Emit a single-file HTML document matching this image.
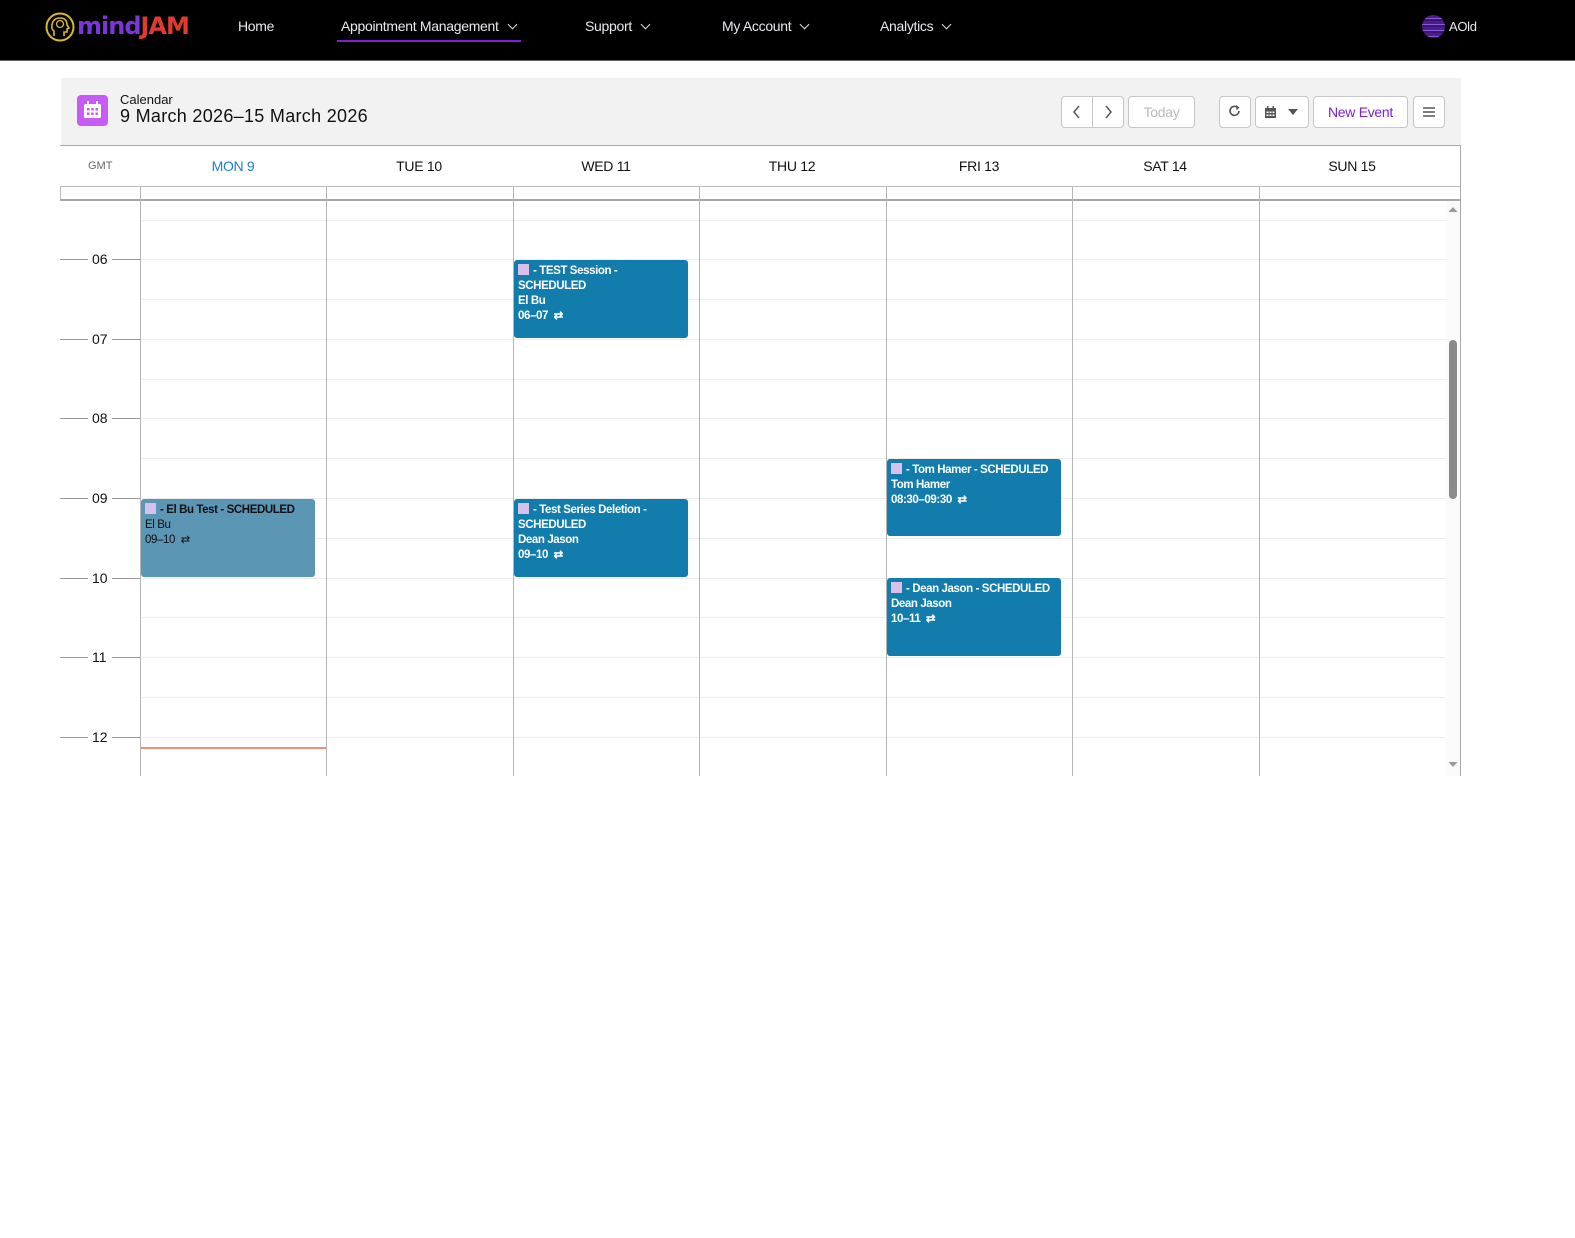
<!DOCTYPE html>
<html><head><meta charset="utf-8"><style>
*{box-sizing:border-box;margin:0;padding:0}
body{width:1575px;height:1238px;background:#fff;font-family:"Liberation Sans",sans-serif;position:relative;overflow:hidden;color:#111}
.a{position:absolute}
.nav{left:0;top:0;width:1575px;height:61px;background:#000;border-bottom:1px solid #666}
.nav .it{color:#e8e8f0;font-size:14px;top:18px;letter-spacing:-0.3px}
.chev{display:inline-block;width:7px;height:7px;border-right:1.5px solid #ddd;border-bottom:1.5px solid #ddd;transform:rotate(45deg);margin-left:10px;position:relative;top:-3px}
.hdr{left:61px;top:78px;width:1400px;height:68px;background:#f2f2f2}
.btn{background:#fff;border:1px solid #c6c6c6;border-radius:4px;height:32px;top:96px}
.hl{height:1px;background:#ececec;left:140px;width:1306px}
.vl{width:1px;background:#b5b5b5;top:187px;height:589px}
.hr{font-size:14px;color:#111}
.tk{height:1px;background:#999}
.ev{border-radius:3px;color:#fff;font-size:11.5px;font-weight:bold;line-height:15px;padding:4px 4px;letter-spacing:-0.4px;overflow:hidden}
.ev .t{white-space:nowrap}
.ev .n{font-weight:normal}
.sq{display:inline-block;width:11px;height:11px;background:#d8c0ea;vertical-align:-1px;margin-right:4px}
.day{top:158px;font-size:14px;width:186px;text-align:center;letter-spacing:-0.3px}
</style></head><body>
<div class="a nav">
  <svg class="a" style="left:45px;top:12px" width="30" height="30" viewBox="0 0 30 30"><circle cx="15" cy="15" r="13.5" fill="none" stroke="#d9b92a" stroke-width="2"/><path d="M9 24 V19 Q6 17 7 13 Q8 6 15 6 Q22 6 22 13 L24 16 L22 17 V20 H19 V24" fill="none" stroke="#d9b92a" stroke-width="1.6"/><circle cx="15" cy="12" r="3.5" fill="none" stroke="#d9b92a" stroke-width="1.3"/></svg>
  <div class="a" style="left:77px;top:10px;font-family:'DejaVu Sans',sans-serif;font-size:24px;font-weight:bold;letter-spacing:-1px;line-height:32px"><span style="color:#7b35d8">mind</span><span style="color:#e23a2e">JAM</span></div>
  <div class="a it" style="left:238px">Home</div>
  <div class="a it" style="left:341px">Appointment Management<span class="chev"></span></div>
  <div class="a" style="left:337px;top:40px;width:184px;height:2px;background:#7a22d0"></div>
  <div class="a it" style="left:585px">Support<span class="chev"></span></div>
  <div class="a it" style="left:722px">My Account<span class="chev"></span></div>
  <div class="a it" style="left:880px">Analytics<span class="chev"></span></div>
  <div class="a" style="left:1422px;top:15px;width:23px;height:23px;border-radius:50%;background:repeating-linear-gradient(180deg,#4a1f8a 0 3px,#8a5ad8 3px 4px,#3a1670 4px 6px)"></div>
  <div class="a it" style="left:1449px;top:19px;font-size:13px">AOld</div>
</div>

<div class="a hdr"></div>
<div class="a" style="left:77px;top:95px;width:31px;height:31px;border-radius:4px;background:#c65cf5"></div>
<svg class="a" style="left:83px;top:100px" width="19" height="20" viewBox="0 0 19 20"><rect x="1" y="4" width="17" height="14" rx="1.5" fill="#fff"/><rect x="4" y="1" width="2" height="5" fill="#fff"/><rect x="13" y="1" width="2" height="5" fill="#fff"/><g fill="#c65cf5"><rect x="4" y="8" width="2.5" height="2.5"/><rect x="8.2" y="8" width="2.5" height="2.5"/><rect x="12.5" y="8" width="2.5" height="2.5"/><rect x="4" y="12.5" width="2.5" height="2.5"/><rect x="8.2" y="12.5" width="2.5" height="2.5"/><rect x="12.5" y="12.5" width="2.5" height="2.5"/></g></svg>
<div class="a" style="left:120px;top:92px;font-size:13px">Calendar</div>
<div class="a" style="left:120px;top:106px;font-size:18px;letter-spacing:0.3px">9 March 2026–15 March 2026</div>

<div class="a btn" style="left:1061px;width:63px"></div>
<div class="a" style="left:1092px;top:97px;width:1px;height:30px;background:#c6c6c6"></div>
<svg class="a" style="left:1071px;top:104px" width="12" height="16"><path d="M8 2 L3 8 L8 14" fill="none" stroke="#555" stroke-width="1.5"/></svg>
<svg class="a" style="left:1102px;top:104px" width="12" height="16"><path d="M4 2 L9 8 L4 14" fill="none" stroke="#555" stroke-width="1.5"/></svg>
<div class="a btn" style="left:1128px;width:67px;color:#b9b9b9;font-size:14px;text-align:center;line-height:30px;letter-spacing:-0.3px">Today</div>
<div class="a btn" style="left:1219px;width:32px"></div>
<svg class="a" style="left:1227px;top:103px" width="16" height="16"><path d="M12 8 A4.5 4.5 0 1 1 10.5 4.5" fill="none" stroke="#555" stroke-width="1.6"/><path d="M9 2 L12.5 4.5 L9.5 7.5Z" fill="#555"/></svg>
<div class="a btn" style="left:1255px;width:54px"></div>
<svg class="a" style="left:1264px;top:104px" width="36" height="16"><rect x="1" y="4" width="11" height="10" fill="#555"/><rect x="3" y="2" width="1.5" height="3" fill="#555"/><rect x="8.5" y="2" width="1.5" height="3" fill="#555"/><g fill="#fff"><rect x="2.5" y="7.5" width="2" height="1.5"/><rect x="5.5" y="7.5" width="2" height="1.5"/><rect x="8.5" y="7.5" width="2" height="1.5"/><rect x="2.5" y="10.5" width="2" height="1.5"/><rect x="5.5" y="10.5" width="2" height="1.5"/><rect x="8.5" y="10.5" width="2" height="1.5"/></g><path d="M24 5 L34 5 L29 11Z" fill="#555"/></svg>
<div class="a btn" style="left:1313px;width:95px;color:#7a22d0;font-size:14px;text-align:center;line-height:30px;letter-spacing:-0.3px">New Event</div>
<div class="a btn" style="left:1413px;width:32px"></div>
<svg class="a" style="left:1421px;top:105px" width="16" height="14"><path d="M2 3H14M2 7H14M2 11H14" stroke="#555" stroke-width="1.5"/></svg>

<div class="a" style="left:60px;top:145px;width:1401px;height:1px;background:#aaa"></div>
<div class="a" style="left:1460px;top:145px;width:1px;height:631px;background:#aaa"></div>
<div class="a" style="left:88px;top:160px;font-size:11px;color:#666">GMT</div>
<div class="a day" style="left:140px;color:#1a7fd0">MON 9</div>
<div class="a day" style="left:326px">TUE 10</div>
<div class="a day" style="left:513px">WED 11</div>
<div class="a day" style="left:699px">THU 12</div>
<div class="a day" style="left:886px">FRI 13</div>
<div class="a day" style="left:1072px">SAT 14</div>
<div class="a day" style="left:1259px">SUN 15</div>
<div class="a" style="left:60px;top:186px;width:1400px;height:1px;background:#bbb"></div>
<div class="a" style="left:60px;top:186px;width:1px;height:14px;background:#bbb"></div>
<div class="a" style="left:60px;top:199px;width:1400px;height:2px;background:#a8a8a8"></div>
<div class="a" style="left:1446px;top:201px;width:14px;height:575px;background:#fafafa"></div>
<svg class="a" style="left:1447px;top:205px" width="12" height="8"><path d="M1.5 7 L6 2 L10.5 7Z" fill="#999"/></svg>
<svg class="a" style="left:1447px;top:761px" width="12" height="8"><path d="M1.5 1 L6 6 L10.5 1Z" fill="#999"/></svg>
<div class="a" style="left:1449px;top:340px;width:8px;height:159px;border-radius:4px;background:#8a8a8a"></div>

<div class="a hl" style="top:220px"></div>
<div class="a hl" style="top:259px"></div>
<div class="a hl" style="top:299px"></div>
<div class="a hl" style="top:339px"></div>
<div class="a hl" style="top:379px"></div>
<div class="a hl" style="top:418px"></div>
<div class="a hl" style="top:458px"></div>
<div class="a hl" style="top:498px"></div>
<div class="a hl" style="top:538px"></div>
<div class="a hl" style="top:578px"></div>
<div class="a hl" style="top:617px"></div>
<div class="a hl" style="top:657px"></div>
<div class="a hl" style="top:697px"></div>
<div class="a hl" style="top:737px"></div>

<div class="a vl" style="left:140px"></div>
<div class="a vl" style="left:326px"></div>
<div class="a vl" style="left:513px"></div>
<div class="a vl" style="left:699px"></div>
<div class="a vl" style="left:886px"></div>
<div class="a vl" style="left:1072px"></div>
<div class="a vl" style="left:1259px"></div>

<div class="a tk" style="left:60px;top:259px;width:28px"></div><div class="a tk" style="left:112px;top:259px;width:28px"></div><div class="a hr" style="left:92px;top:251px">06</div>
<div class="a tk" style="left:60px;top:339px;width:28px"></div><div class="a tk" style="left:112px;top:339px;width:28px"></div><div class="a hr" style="left:92px;top:331px">07</div>
<div class="a tk" style="left:60px;top:418px;width:28px"></div><div class="a tk" style="left:112px;top:418px;width:28px"></div><div class="a hr" style="left:92px;top:410px">08</div>
<div class="a tk" style="left:60px;top:498px;width:28px"></div><div class="a tk" style="left:112px;top:498px;width:28px"></div><div class="a hr" style="left:92px;top:490px">09</div>
<div class="a tk" style="left:60px;top:578px;width:28px"></div><div class="a tk" style="left:112px;top:578px;width:28px"></div><div class="a hr" style="left:92px;top:570px">10</div>
<div class="a tk" style="left:60px;top:657px;width:28px"></div><div class="a tk" style="left:112px;top:657px;width:28px"></div><div class="a hr" style="left:92px;top:649px">11</div>
<div class="a tk" style="left:60px;top:737px;width:28px"></div><div class="a tk" style="left:112px;top:737px;width:28px"></div><div class="a hr" style="left:92px;top:729px">12</div>

<div class="a" style="left:141px;top:747px;width:185px;height:2px;background:#fa8a78"></div>

<div class="a ev" style="left:514px;top:260px;width:174px;height:78px;background:#127dad"><span class="sq"></span>- TEST Session - SCHEDULED<br><span>El Bu</span><br><span>06–07 &nbsp;⇄</span></div>
<div class="a ev" style="left:141px;top:499px;width:174px;height:78px;background:#5b96b5;color:#111"><div class="t"><span class="sq"></span>- El Bu Test - SCHEDULED</div><span class="n">El Bu</span><br><span class="n">09–10 &nbsp;⇄</span></div>
<div class="a ev" style="left:514px;top:499px;width:174px;height:78px;background:#127dad"><span class="sq"></span>- Test Series Deletion - SCHEDULED<br><span>Dean Jason</span><br><span>09–10 &nbsp;⇄</span></div>
<div class="a ev" style="left:887px;top:459px;width:174px;height:77px;background:#127dad"><div class="t"><span class="sq"></span>- Tom Hamer - SCHEDULED</div><span>Tom Hamer</span><br><span>08:30–09:30 &nbsp;⇄</span></div>
<div class="a ev" style="left:887px;top:578px;width:174px;height:78px;background:#127dad"><div class="t"><span class="sq"></span>- Dean Jason - SCHEDULED</div><span>Dean Jason</span><br><span>10–11 &nbsp;⇄</span></div>
</body></html>
